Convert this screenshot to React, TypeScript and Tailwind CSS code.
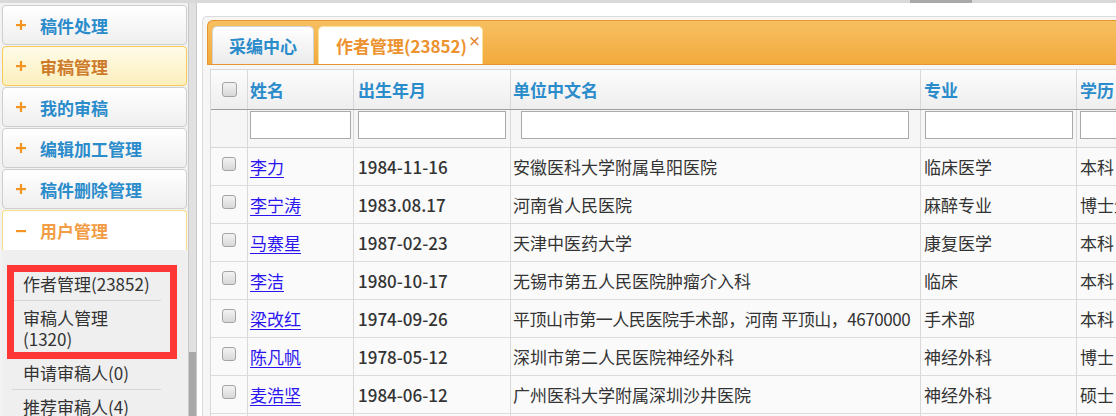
import React from "react";

const F = "font-['Noto_Sans_CJK_SC','Microsoft_YaHei',sans-serif]";

function PlusIcon({ minus = false }: { minus?: boolean }) {
  return (
    <svg width="10" height="10" viewBox="0 0 10 10" className="shrink-0">
      <rect x="0" y="4" width="10" height="2.2" fill="#f39423" />
      {!minus && <rect x="3.9" y="0" width="2.2" height="10" fill="#f39423" />}
    </svg>
  );
}

type Kind = "normal" | "hover" | "open";

function Panel({ label, kind = "normal" }: { label: string; kind?: Kind }) {
  const cls =
    kind === "normal"
      ? "border border-[#cecece] rounded-[4px] bg-linear-to-b from-white to-[#efefef] text-[#2b8ccb] mb-[1px]"
      : kind === "hover"
      ? "border border-[#f6cb55] rounded-[4px] bg-linear-to-b from-[#fffbe8] to-[#fcefbd] text-[#cd7b2b] mb-[1px]"
      : "border border-b-0 border-[#f8dc80] rounded-t-[4px] bg-white text-[#f29d45]";
  return (
    <div className={`h-[40px] flex items-center pl-[13px] ${cls}`}>
      <span className="w-[24px] flex items-center">
        <PlusIcon minus={kind === "open"} />
      </span>
      <span className="text-[17px] font-bold leading-none whitespace-nowrap">{label}</span>
    </div>
  );
}

function SubItem({ children, last = false }: { children: React.ReactNode; last?: boolean }) {
  return (
    <div className={`py-[6px] pl-[11px] text-[17px] leading-[21px] text-[#333] whitespace-nowrap ${last ? "" : "border-b border-[#d6d6d6]"}`}>
      {children}
    </div>
  );
}

function Check({ size = 14 }: { size?: number }) {
  return (
    <div
      className={`${size === 15 ? "w-[15px] h-[15px]" : "w-[14px] h-[14px]"} rounded-[3px] border border-[#a3a3a3] bg-linear-to-b from-[#f3f3f3] to-[#d8d8d8]`}
    />
  );
}

type Row = { name: string; date: string; unit: string; major: string; edu: string; tight?: boolean };

const rows: Row[] = [
  { name: "李力", date: "1984-11-16", unit: "安徽医科大学附属阜阳医院", major: "临床医学", edu: "本科" },
  { name: "李宁涛", date: "1983.08.17", unit: "河南省人民医院", major: "麻醉专业", edu: "博士生" },
  { name: "马寨星", date: "1987-02-23", unit: "天津中医药大学", major: "康复医学", edu: "本科" },
  { name: "李洁", date: "1980-10-17", unit: "无锡市第五人民医院肿瘤介入科", major: "临床", edu: "本科" },
  { name: "梁改红", date: "1974-09-26", unit: "平顶山市第一人民医院手术部，河南 平顶山，4670000", major: "手术部", edu: "本科", tight: true },
  { name: "陈凡帆", date: "1978-05-12", unit: "深圳市第二人民医院神经外科", major: "神经外科", edu: "博士" },
  { name: "麦浩坚", date: "1984-06-12", unit: "广州医科大学附属深圳沙井医院", major: "神经外科", edu: "硕士" },
  { name: "张明", date: "1982-03-08", unit: "北京大学第一医院", major: "外科", edu: "本科" },
];

const C1 = "w-[37px] shrink-0 border-r border-[#d8d8d8]";
const C2 = "w-[106px] shrink-0 border-r border-[#d8d8d8]";
const C3 = "w-[157px] shrink-0 border-r border-[#d8d8d8]";
const C4 = "w-[410px] shrink-0 border-r border-[#d8d8d8]";
const C5 = "w-[156px] shrink-0 border-r border-[#d8d8d8]";
const C6 = "w-[160px] shrink-0 border-r border-[#d8d8d8]";

export default function App() {
  return (
    <div className={`relative w-[1116px] h-[416px] overflow-hidden flex flex-col bg-white ${F}`}>
      {/* top scrollbar remnant */}
      <div className="h-[3px] shrink-0 flex bg-[#d9d9d9]">
        <div className="w-[910px] shrink-0" />
        <div className="w-[62px] shrink-0 bg-[#a9a9a9]" />
      </div>

      <div className="flex flex-1 min-h-0">
        {/* Sidebar */}
        <div className="w-[188px] shrink-0 bg-[#f2f2f2] pl-[2px] pr-[1px] pt-[2px] overflow-hidden">
          <Panel label="稿件处理" />
          <Panel label="审稿管理" kind="hover" />
          <Panel label="我的审稿" />
          <Panel label="编辑加工管理" />
          <Panel label="稿件删除管理" />
          <Panel label="用户管理" kind="open" />
          <div className="bg-[#efefef] pt-[17px] pl-[10px] pr-[26px] pb-[20px]">
            <SubItem>作者管理(23852)</SubItem>
            <SubItem>
              审稿人管理
              <br />
              (1320)
            </SubItem>
            <SubItem>申请审稿人(0)</SubItem>
            <SubItem last>推荐审稿人(4)</SubItem>
          </div>
        </div>

        {/* Sidebar scrollbar */}
        <div className="w-[9px] shrink-0 flex flex-col border-x border-[#c8c8c8] bg-[#e1e1e1]">
          <div className="h-[349px] shrink-0" />
          <div className="flex-1 bg-[#a8a8a8]" />
        </div>

        {/* Main */}
        <div className="flex-1 min-w-0 bg-white pl-[5px] pt-[13px] overflow-hidden">
          <div className="h-full border-l border-t border-[#dcdcdc] rounded-tl-[5px] bg-[#f6f6f6] pl-[4px] pt-[3px] overflow-hidden">
            {/* Tab bar */}
            <div className="h-[45px] border border-r-0 border-[#e8952c] rounded-tl-[6px] bg-linear-to-b from-[#f7bf60] to-[#f2aa3c] flex items-end pl-[4px] gap-[4px]">
              <div className="w-[102px] h-[38px] shrink-0 rounded-t-[5px] border border-b-0 border-[#d3d3d3] bg-linear-to-b from-white to-[#ebebeb] flex items-center pl-[16px]">
                <span className="text-[17px] font-bold text-[#2b8ccb] leading-none whitespace-nowrap">采编中心</span>
              </div>
              <div className="w-[165px] h-[38px] shrink-0 rounded-t-[5px] border border-b-0 border-[#fbe29a] bg-white flex items-center pl-[17px] whitespace-nowrap">
                <span className="text-[17px] font-bold text-[#ec922e] leading-none">作者管理(23852)</span>
                <span className="self-start mt-[7px] ml-[1px] text-[13px] font-bold text-[#e5832c] leading-none">×</span>
              </div>
            </div>

            {/* Table */}
            <div className="mt-[4px] ml-[3px] border-l border-t border-[#d8d8d8] w-[1100px]">
              {/* header */}
              <div className="flex h-[40px] border-b border-[#9d9d9d] bg-linear-to-b from-[#fcfcfc] to-[#eeeeee] text-[17px] font-bold text-[#2b8ccb] whitespace-nowrap">
                <div className={`${C1} flex items-center justify-center`}>
                  <Check size={15} />
                </div>
                <div className={`${C2} flex items-center pl-[2px]`}>姓名</div>
                <div className={`${C3} flex items-center pl-[4px]`}>出生年月</div>
                <div className={`${C4} flex items-center pl-[2px]`}>单位中文名</div>
                <div className={`${C5} flex items-center pl-[3px]`}>专业</div>
                <div className={`${C6} flex items-center pl-[3px]`}>学历</div>
              </div>
              {/* filter row */}
              <div className="flex h-[38px] border-b border-[#d8d8d8] bg-[#f6f6f6]">
                <div className={C1} />
                <div className={`${C2} pt-[1px] pl-[2px]`}>
                  <div className="w-[101px] h-[28px] border border-[#a9a9a9] bg-white" />
                </div>
                <div className={`${C3} pt-[1px] pl-[4px]`}>
                  <div className="w-[148px] h-[28px] border border-[#a9a9a9] bg-white" />
                </div>
                <div className={`${C4} pt-[1px] pl-[10px]`}>
                  <div className="w-[388px] h-[28px] border border-[#a9a9a9] bg-white" />
                </div>
                <div className={`${C5} pt-[1px] pl-[4px]`}>
                  <div className="w-[148px] h-[28px] border border-[#a9a9a9] bg-white" />
                </div>
                <div className={`${C6} pt-[1px] pl-[3px]`}>
                  <div className="w-[148px] h-[28px] border border-[#a9a9a9] bg-white" />
                </div>
              </div>
              {/* data rows */}
              {rows.map((r, i) => (
                <div key={i} className="flex h-[38px] border-b border-[#dcdcdc] bg-[#fafafa] text-[17px] text-[#333] leading-none whitespace-nowrap">
                  <div className={`${C1} flex justify-center pt-[9px]`}>
                    <Check />
                  </div>
                  <div className={`${C2} flex items-center pl-[2px]`}>
                    <span className="text-[#2a14f0] underline underline-offset-[3px]">{r.name}</span>
                  </div>
                  <div className={`${C3} flex items-center pl-[4px] font-medium`}>{r.date}</div>
                  <div className={`${C4} flex items-center pl-[2px] ${r.tight ? "tracking-[-0.45px]" : ""}`}>{r.unit}</div>
                  <div className={`${C5} flex items-center pl-[3px]`}>{r.major}</div>
                  <div className={`${C6} flex items-center pl-[3px]`}>{r.edu}</div>
                </div>
              ))}
            </div>
          </div>
        </div>
      </div>

      {/* red annotation box */}
      <div className="absolute left-[7px] top-[265px] w-[170px] h-[94px] border-[7px] border-[#ff3636]" />
    </div>
  );
}
